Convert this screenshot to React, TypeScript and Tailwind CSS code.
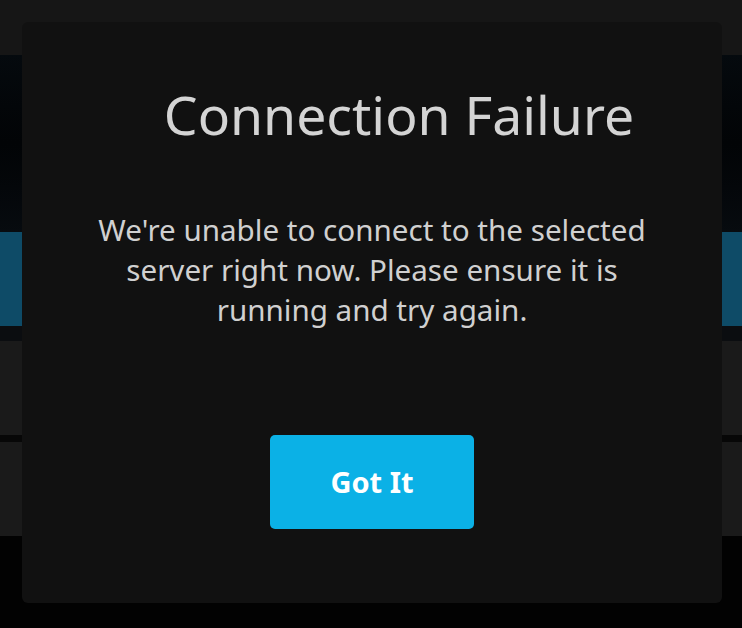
export default function App() {
  return (
    <div
      className="relative h-[628px] w-[742px] overflow-hidden bg-[#020202]"
      style={{ fontFamily: '"Noto Sans", "Open Sans", sans-serif' }}
    >

      {/* Page behind the dialog */}

      <div className="flex flex-col">
        <div className="h-[55px] bg-[#161616]" />
        <div className="h-[177px] bg-gradient-to-b from-[#050a0e] via-[#020406] to-[#070b0f]" />
        <div className="h-[94px] bg-[#0e4b67]" />
        <div className="h-[15px] bg-[#0b0d10]" />
        <div className="h-[94px] bg-[#1a1a1a]" />
        <div className="h-[7px] bg-[#070707]" />
        <div className="h-[94px] bg-[#1a1a1a]" />
      </div>

      {/* Dialog */}

      <div className="absolute left-[22px] top-[22px] flex h-[581px] w-[700px] flex-col items-center rounded-[6px] bg-[#111111] pt-[60px]">

        <h1 className="pl-[54px] text-[53.5px] leading-[65px] font-normal text-[#d4d4d4]">
          Connection Failure
        </h1>

        <p className="mt-[63px] w-[570px] text-center text-[29.6px] leading-[40px] font-normal text-[#d0d0d0]">
          We're unable to connect to the selected server right now. Please ensure it is running and try again.
        </p>

        <button className="mt-[105px] flex h-[94px] w-[204px] items-center justify-center rounded-[5px] bg-[#0bb1e6] text-[29px] font-bold text-white">
          Got It
        </button>

      </div>

    </div>
  );
}
